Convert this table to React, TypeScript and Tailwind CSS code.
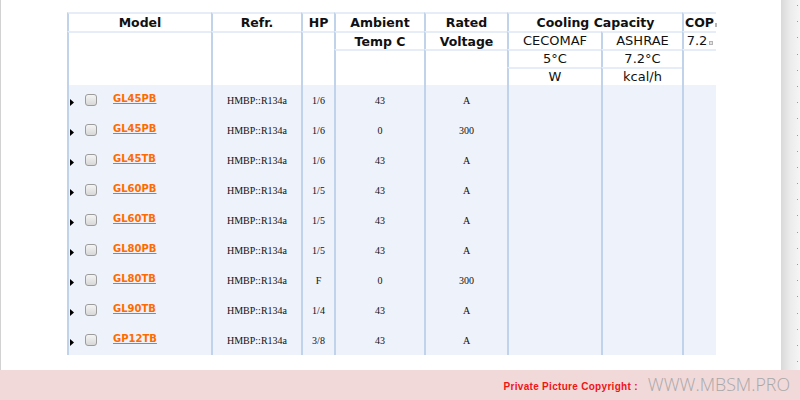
import React from "react";

const rows = [
  { m: "GL45PB", hp: "1/6", t: "43", v: "A" },
  { m: "GL45PB", hp: "1/6", t: "0", v: "300" },
  { m: "GL45TB", hp: "1/6", t: "43", v: "A" },
  { m: "GL60PB", hp: "1/5", t: "43", v: "A" },
  { m: "GL60TB", hp: "1/5", t: "43", v: "A" },
  { m: "GL80PB", hp: "1/5", t: "43", v: "A" },
  { m: "GL80TB", hp: "F", t: "0", v: "300" },
  { m: "GL90TB", hp: "1/4", t: "43", v: "A" },
  { m: "GP12TB", hp: "3/8", t: "43", v: "A" },
];

const H =
  "flex items-center justify-center bg-white border-t-2 border-t-[#e6edf7] border-l-2 border-l-[#c1d3ea] whitespace-nowrap text-[#111]";
const HB = H + " font-bold text-[12.5px] pt-[2px]";
const HN = H + " text-[13px]";
const B =
  "flex items-center justify-center bg-[#eef2fa] border-l-2 border-l-[#c1d3ea] font-['Liberation_Serif',serif] text-[10px] text-[#111]";

function Tiny() {
  return (
    <span className="inline-block w-[4px] h-[4px] border border-[#b4b4b4] bg-[#e4e4e4] self-end mb-[4px] ml-[1px]" />
  );
}

export default function App() {
  return (
    <div className="w-[800px] h-[400px] flex flex-col bg-white overflow-hidden font-['DejaVu_Sans',sans-serif]">
      <div className="flex h-[370px]">
        <div className="w-px bg-[#d2d2d2]" />
        <div className="flex-1 pl-[66px] pt-[12px]">
          <div className="grid grid-cols-[144px_90px_33px_90px_83px_94px_81px_34px] grid-rows-[19px_18px_18px_18px_repeat(9,30px)] w-[649px]">
            {/* row 1 */}
            <div className={HB}>Model</div>
            <div className={HB}>Refr.</div>
            <div className={HB}>HP</div>
            <div className={HB}>Ambient</div>
            <div className={HB}>Rated</div>
            <div className={HB + " col-span-2"}>Cooling Capacity</div>
            <div className={HB + " justify-start pl-px overflow-visible"}>
              COP
              <Tiny />
            </div>
            {/* row 2 */}
            <div className={H + " row-span-3"} />
            <div className={H + " row-span-3"} />
            <div className={H + " row-span-3"} />
            <div className={HB}>Temp C</div>
            <div className={HB}>Voltage</div>
            <div className={HN}>CECOMAF</div>
            <div className={HN}>ASHRAE</div>
            <div className={HN}>
              7.2
              <span className="ml-[1px] flex self-stretch">
                <Tiny />
              </span>
            </div>
            {/* row 3 */}
            <div className={H + " row-span-2"} />
            <div className={H + " row-span-2"} />
            <div className={HN}>5°C</div>
            <div className={HN}>7.2°C</div>
            <div className={H + " row-span-2"} />
            {/* row 4 */}
            <div className={HN}>W</div>
            <div className={HN}>kcal/h</div>
            {/* body */}
            {rows.map((r, i) => (
              <React.Fragment key={i}>
                <div className="flex items-center bg-[#eef2fa] border-l-2 border-l-[#c1d3ea] pl-[1px]">
                  <svg width="4" height="7" viewBox="0 0 4 7" className="mt-[5px]">
                    <polygon points="0,0 4,3.5 0,7" fill="#000" />
                  </svg>
                  <span className="ml-[11px] w-[12px] h-[12px] rounded-[3px] border border-[#9c9c9c] bg-gradient-to-b from-[#f4f4f4] to-[#d8d8d8]" />
                  <a className="ml-[16px] mb-[3px] text-[10px] font-bold text-[#ff6a00] underline underline-offset-[1px]">
                    {r.m}
                  </a>
                </div>
                <div className={B}>HMBP::R134a</div>
                <div className={B}>{r.hp}</div>
                <div className={B}>{r.t}</div>
                <div className={B}>{r.v}</div>
                <div className={B} />
                <div className={B} />
                <div className={B} />
              </React.Fragment>
            ))}
          </div>
        </div>
        <div className="w-[19px] bg-gradient-to-r from-[#d9d9d9] via-[#ececec] to-[#f5f5f5] flex flex-col items-end pr-[2px] pt-[5px] gap-[15.2px]">
          {Array.from({ length: 23 }).map((_, i) => (
            <span key={i} className="w-px h-px bg-[#9a9a9a]" />
          ))}
        </div>
      </div>
      <div className="h-[30px] bg-[#f1d9da] flex items-center justify-end pr-[10px]">
        <span className="font-['Liberation_Sans',sans-serif] font-bold text-[10px] tracking-[0.3px] text-[#f01414] mt-[2px]">
          Private Picture Copyright :
        </span>
        <span className="ml-[10px] font-['Open_Sans',sans-serif] font-light text-[17.8px] text-[#a8a8a8] leading-none">
          WWW.MBSM.PRO
        </span>
      </div>
    </div>
  );
}
